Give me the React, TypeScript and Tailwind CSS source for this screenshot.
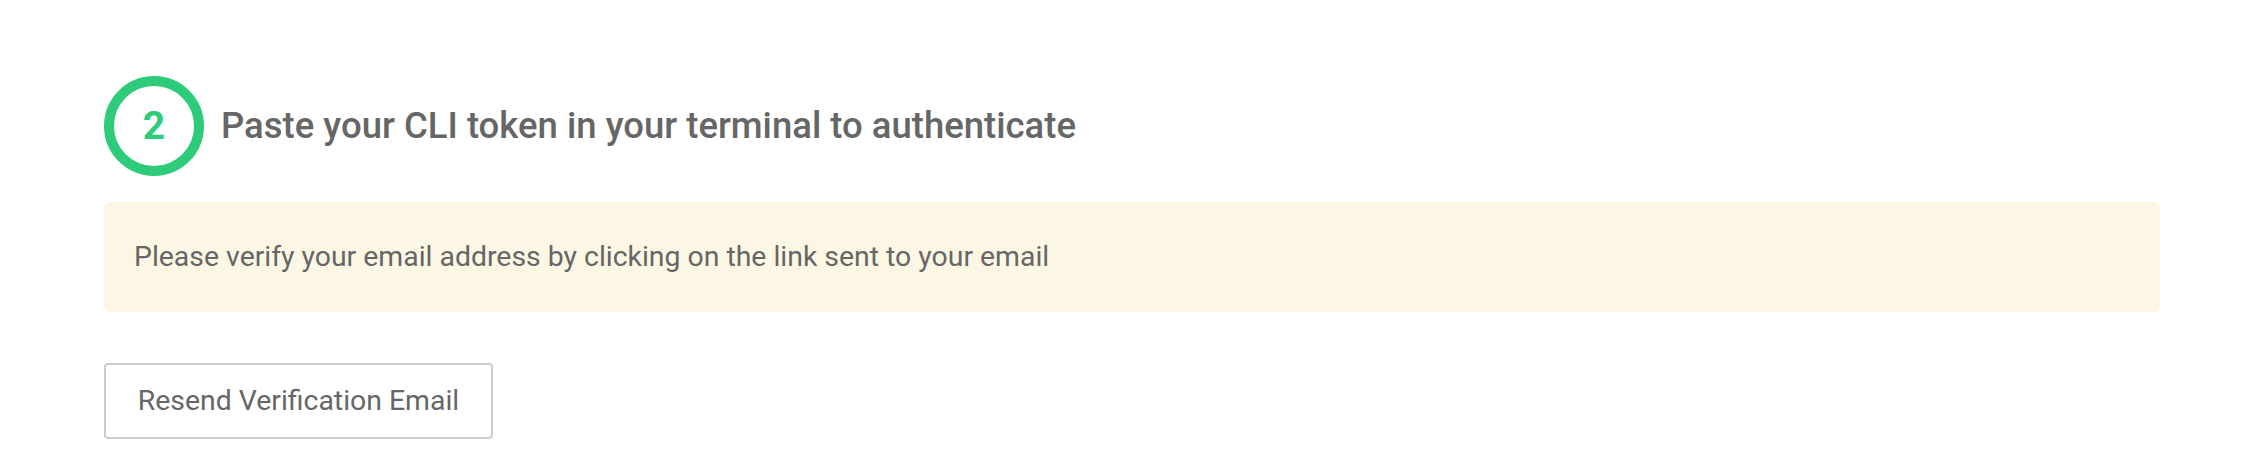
export default function App() {
  return (
    <div className="min-h-[462px] w-full bg-white pl-[104px] pr-[106px] pt-[76px]" style={{ fontFamily: "Roboto, 'Liberation Sans', sans-serif" }}>
      <div className="flex items-center gap-[17px]">
        <div className="flex h-[100px] w-[100px] shrink-0 items-center justify-center rounded-full border-[10px] border-[#2ecc7a] text-[39px] font-bold text-[#2ecc7a]">
          2
        </div>
        <h2 className="text-[36.5px] font-medium text-[#666666]">Paste your CLI token in your terminal to authenticate</h2>
      </div>
      <div className="mt-[26px] flex h-[110px] items-center rounded-[6px] bg-[#fcf7e4] px-[30px] text-[28.4px] text-[#666666]">
        Please verify your email address by clicking on the link sent to your email
      </div>
      <button className="mt-[51px] flex h-[76px] w-[389px] items-center justify-center rounded-[4px] border-2 border-[#cccccc] bg-white text-[28.4px] text-[#666666]">
        Resend Verification Email
      </button>
    </div>
  );
}
